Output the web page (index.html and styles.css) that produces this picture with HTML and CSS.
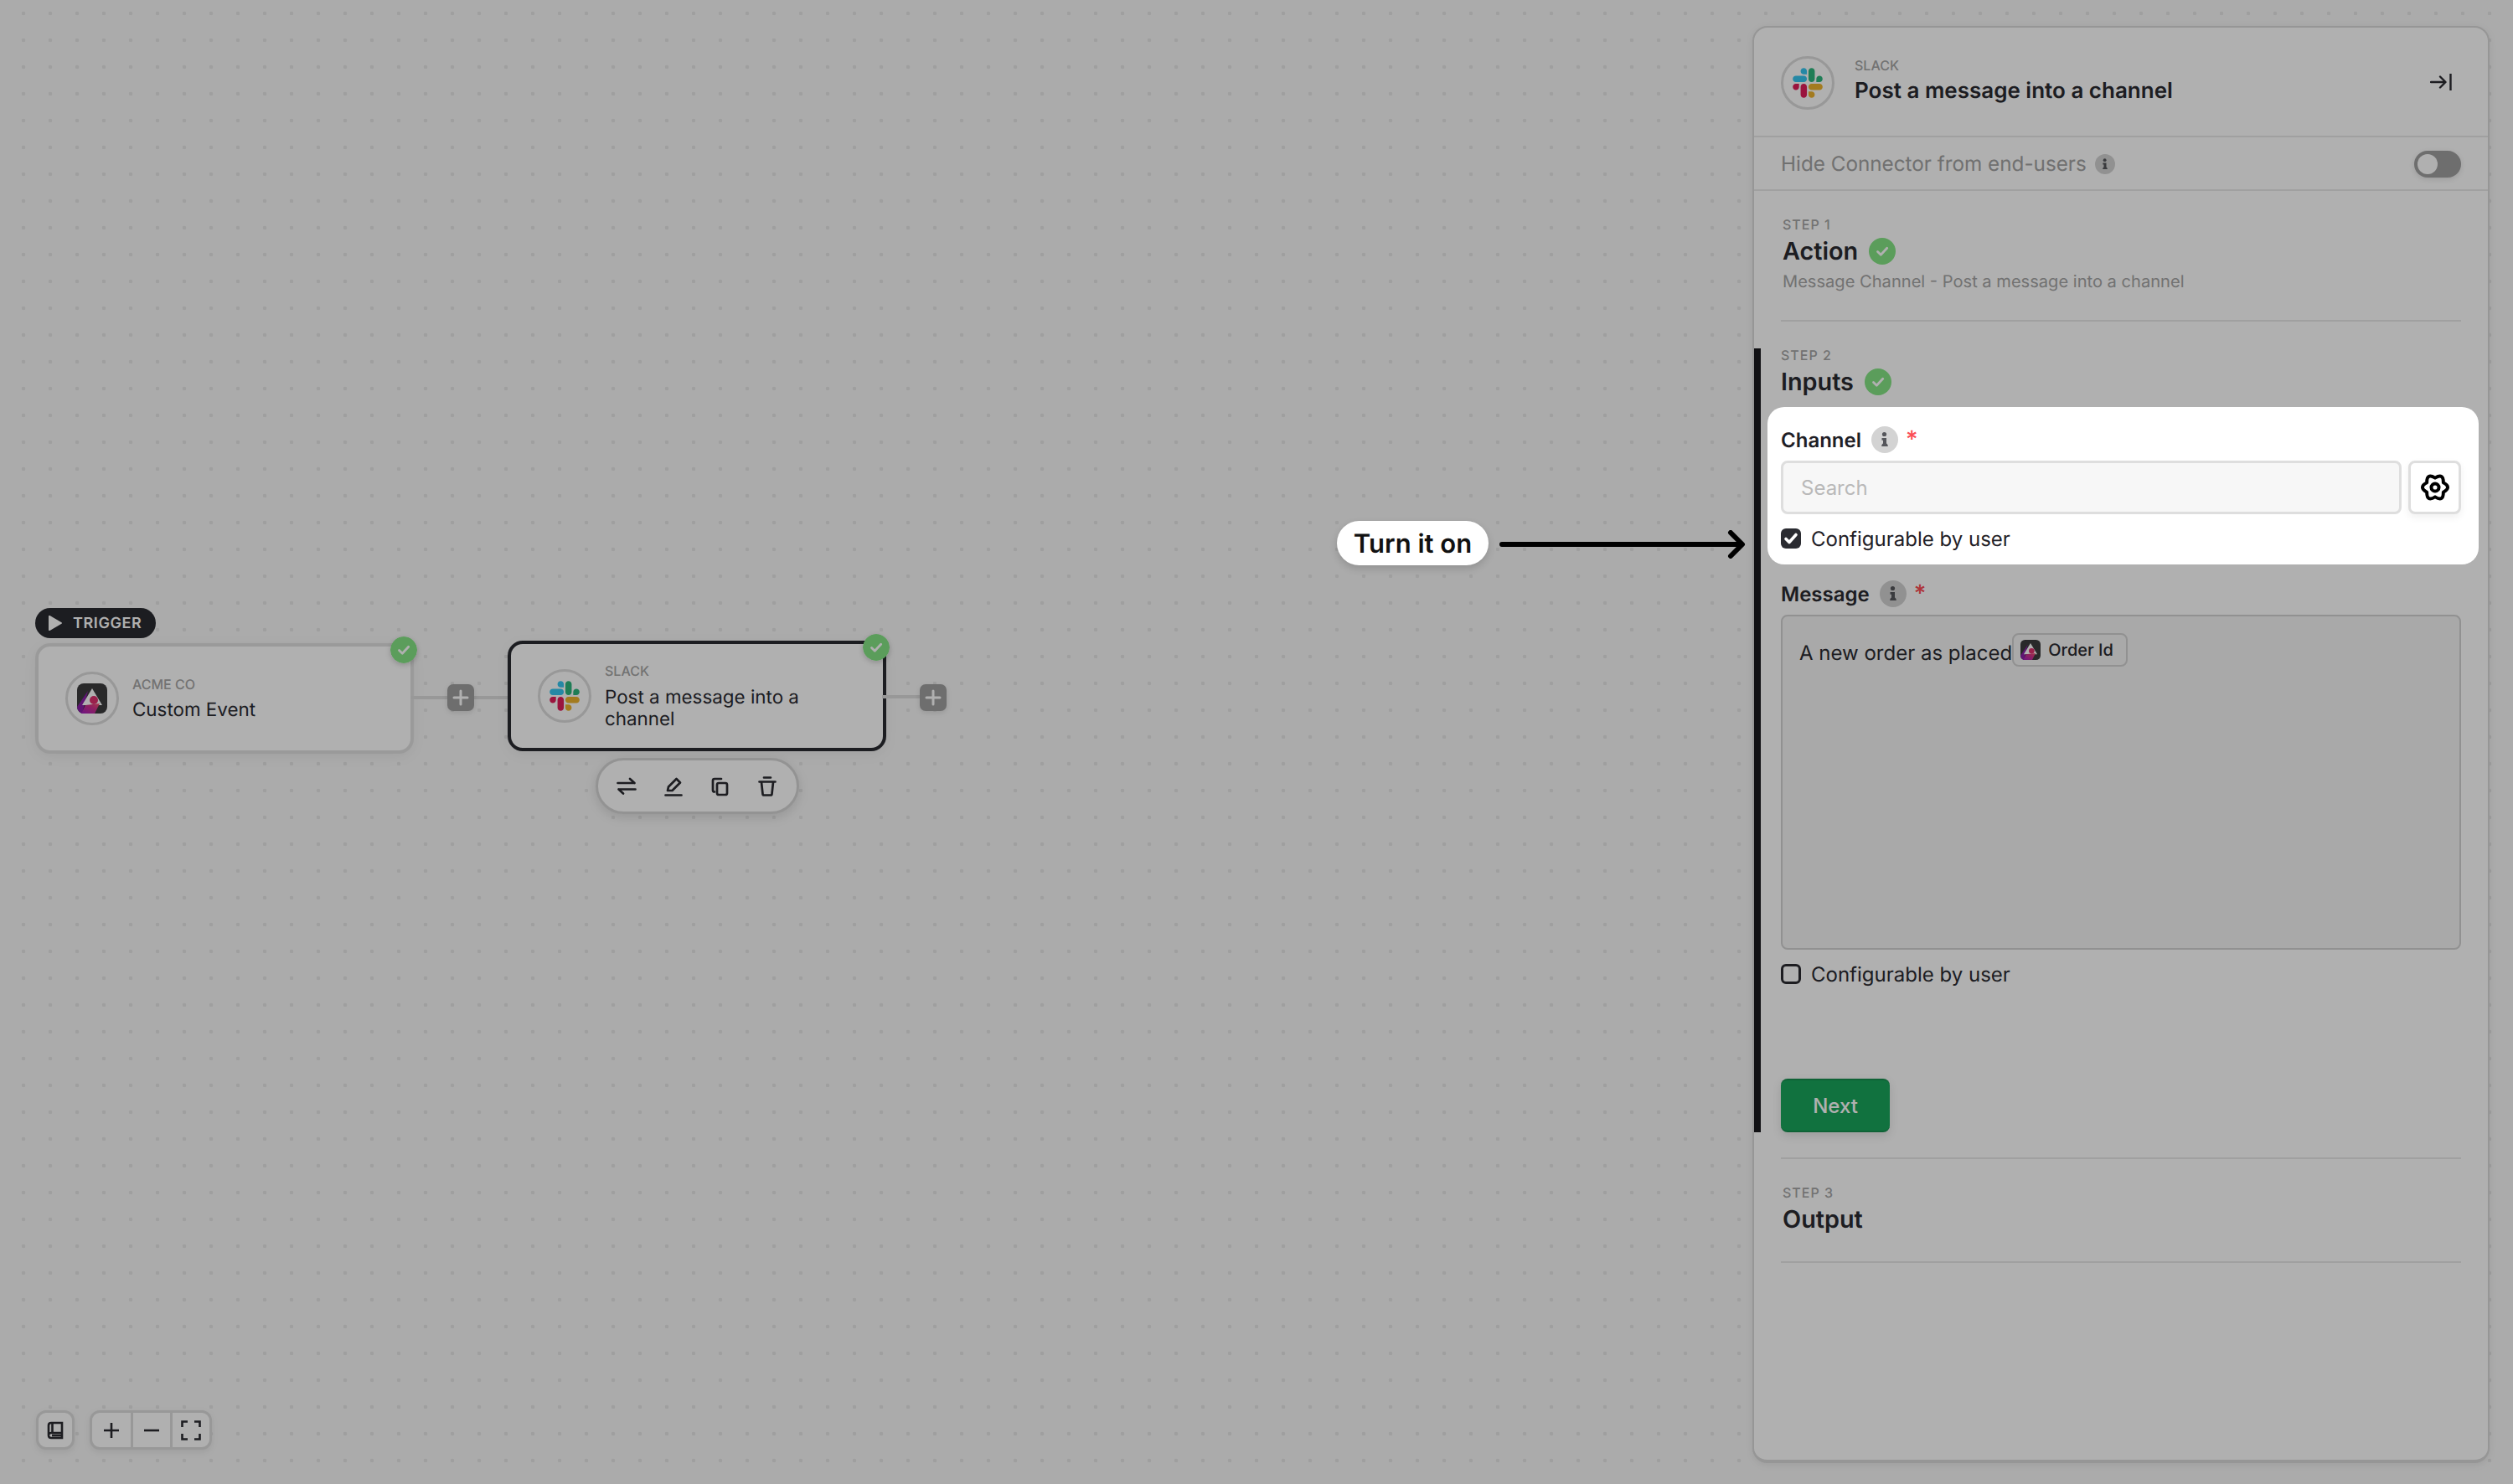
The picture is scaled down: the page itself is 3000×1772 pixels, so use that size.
FILE: index.html
```html
<!DOCTYPE html>
<html lang="en">
<head>
  <meta charset="UTF-8">
  <title>Workflow builder</title>
  <link rel="stylesheet" href="styles.css">
</head>
<body>

  <svg class="defs" width="0" height="0">
    <symbol id="slack" viewBox="0 0 127 127">
      <path d="M27.2 80c0 7.3-5.9 13.2-13.2 13.2C6.7 93.2.8 87.3.8 80c0-7.3 5.9-13.2 13.2-13.2h13.2V80zm6.6 0c0-7.3 5.9-13.2 13.2-13.2 7.3 0 13.2 5.9 13.2 13.2v33c0 7.3-5.9 13.2-13.2 13.2-7.3 0-13.2-5.9-13.2-13.2V80z" fill="#E01E5A"/>
      <path d="M47 27c-7.3 0-13.2-5.9-13.2-13.2C33.8 6.5 39.7.6 47 .6c7.3 0 13.2 5.9 13.2 13.2V27H47zm0 6.7c7.3 0 13.2 5.9 13.2 13.2 0 7.3-5.9 13.2-13.2 13.2H13.9C6.6 60.1.7 54.2.7 46.9c0-7.3 5.9-13.2 13.2-13.2H47z" fill="#36C5F0"/>
      <path d="M99.9 46.9c0-7.3 5.9-13.2 13.2-13.2 7.3 0 13.2 5.9 13.2 13.2 0 7.3-5.9 13.2-13.2 13.2H99.9V46.9zm-6.6 0c0 7.3-5.9 13.2-13.2 13.2-7.3 0-13.2-5.9-13.2-13.2V13.8C66.9 6.5 72.8.6 80.1.6c7.3 0 13.2 5.9 13.2 13.2v33.1z" fill="#2EB67D"/>
      <path d="M80.1 99.8c7.3 0 13.2 5.9 13.2 13.2 0 7.3-5.9 13.2-13.2 13.2-7.3 0-13.2-5.9-13.2-13.2V99.8h13.2zm0-6.6c-7.3 0-13.2-5.9-13.2-13.2 0-7.3 5.9-13.2 13.2-13.2h33.1c7.3 0 13.2 5.9 13.2 13.2 0 7.3-5.9 13.2-13.2 13.2H80.1z" fill="#ECB22E"/>
    </symbol>
    <linearGradient id="acmeGrad" x1="0" y1="1" x2="1" y2="0">
      <stop offset="0" stop-color="#a020c0"/>
      <stop offset="0.6" stop-color="#d0308a"/>
      <stop offset="1" stop-color="#f0506a"/>
    </linearGradient>
    <symbol id="acme" viewBox="0 0 36 36">
      <rect width="36" height="36" rx="8" fill="#3c3c3e"/>
      <path d="M0 28 L13 9 L6 36 H8 A8 8 0 0 1 0 28Z" fill="#8a1fa8"/>
      <path d="M18 6 L6 26 L30 26Z" fill="#fff"/>
      <path d="M5 36 L10 26 L27 24 L21 36Z" fill="url(#acmeGrad)"/>
      <circle cx="20" cy="20" r="5" fill="#e0306e"/>
    </symbol>
    <symbol id="check" viewBox="0 0 32 32">
      <circle cx="16" cy="16" r="16" fill="#84e484"/>
      <path d="M10.5 16.5l3.8 3.8 7.400-8" fill="none" stroke="#fff" stroke-width="2.800" stroke-linecap="round" stroke-linejoin="round"/>
    </symbol>
    <symbol id="info" viewBox="0 0 32 32">
      <circle cx="16" cy="16" r="16" fill="#d3d3d3"/>
      <circle cx="15.500" cy="9.500" r="2.600" fill="#55565b"/>
      <path d="M12.500 14H18v6.500c1 .8 1.800 1.600 1.800 3.500H12.200c0-1.900.8-2.700 1.800-3.500v-3.700h-1.500z" fill="#55565b"/>
    </symbol>
    <symbol id="plus" viewBox="0 0 32 32">
      <path d="M16 8v16M8 16h16" fill="none" stroke="#fff" stroke-width="3" stroke-linecap="round"/>
    </symbol>
  </svg>

  <div class="canvas">

    <div class="badge-trigger">
      <svg class="badge-play" viewBox="0 0 16 18"><path d="M0 1v16c0 1 .8 1.300 1.500.9L15.500 9.800c.6-.4.6-1.200 0-1.600L1.500.1C.8-.3 0 0 0 1z" fill="#fff"/></svg>
      TRIGGER
    </div>

    <div class="node node-first">
      <div class="icon-ring"><svg class="logo"><use href="#acme"/></svg></div>
      <div class="node-text">
        <div class="node-app">ACME CO</div>
        <div class="node-name">Custom Event</div>
      </div>
      <svg class="node-check"><use href="#check"/></svg>
    </div>

    <div class="link link-one"></div>
    <div class="add-btn add-one"><svg><use href="#plus"/></svg></div>

    <div class="node node-second">
      <div class="icon-ring"><svg class="logo"><use href="#slack"/></svg></div>
      <div class="node-text">
        <div class="node-app">SLACK</div>
        <div class="node-name">Post a message into a channel</div>
      </div>
      <svg class="node-check"><use href="#check"/></svg>
    </div>

    <div class="link link-two"></div>
    <div class="add-btn add-two"><svg><use href="#plus"/></svg></div>

    <div class="node-tools">
      <svg viewBox="0 0 24 24"><path d="M1.500 8h20M16 3l5.500 5M22.500 15.500h-20M8 20.500l-5.500-5" /></svg>
      <svg viewBox="0 0 24 24"><path d="M2.500 22.500h19M5 17l1-4.500L15.500 3 20 7.500 10.500 17z"/></svg>
      <svg viewBox="0 0 24 24"><path d="M5 18.500C3.800 18.500 3 17.700 3 16.500V5c0-1.200.8-2 2-2h8"/><rect x="8" y="8" width="12" height="14" rx="2"/></svg>
      <svg viewBox="0 0 24 24"><path d="M8 1.500h8M2.500 6.500h19M5 7l1.500 14c.1.8.7 1.500 1.500 1.500h8c.8 0 1.400-.7 1.500-1.500L19 7"/></svg>
    </div>

    <div class="controls">
      <button class="ctl-btn ctl-single">
        <svg viewBox="0 0 24 24"><path d="M7 3h13v18H7c-2 0-3-1-3-3V6c0-2 1-3 3-3zM8.500 3v12M4.500 16.500c.5-1 1.200-1.500 2.500-1.500h13M8 18h12"/></svg>
      </button>
      <div class="ctl-group">
        <button class="ctl-btn"><svg viewBox="0 0 24 24"><path d="M12 3v18M3 12h18"/></svg></button>
        <button class="ctl-btn"><svg viewBox="0 0 24 24"><path d="M3 12h18"/></svg></button>
        <button class="ctl-btn"><svg viewBox="0 0 24 24"><path d="M8 1.500H1.500V8M16 1.500h6.500V8M1.500 16v6.500H8M22.500 16v6.500H16"/></svg></button>
      </div>
    </div>

    <aside class="panel">
      <div class="panel-head">
        <div class="icon-ring"><svg class="logo"><use href="#slack"/></svg></div>
        <div class="node-text">
          <div class="node-app">SLACK</div>
          <div class="panel-title">Post a message into a channel</div>
        </div>
        <svg class="collapse" viewBox="0 0 26 20"><path d="M1 10h17M12 3.500l6.500 6.500-6.500 6.500M24.500 0v20"/></svg>
      </div>

      <div class="hide-row">
        <span class="hide-text">Hide Connector from end-users</span>
        <svg class="info-small"><use href="#info"/></svg>
        <span class="toggle"><span class="toggle-knob"></span></span>
      </div>

      <section class="step step-one">
        <div class="step-label">STEP 1</div>
        <div class="step-title">Action <svg class="step-check"><use href="#check"/></svg></div>
        <div class="step-desc">Message Channel - Post a message into a channel</div>
      </section>

      <section class="step-active">
        <div class="step-label">STEP 2</div>
        <div class="step-title step-title-inputs">Inputs <svg class="step-check"><use href="#check"/></svg></div>

        <div class="highlight">
          <div class="field-label">Channel <svg class="info-icon"><use href="#info"/></svg><span class="req">*</span></div>
          <div class="input-row">
            <input class="search" type="text" placeholder="Search">
            <button class="gear-btn">
              <svg viewBox="0 0 24 24"><path d="M18.930 8Q26.300 12 18.930 16Q19.150 24.380 12 20Q4.850 24.380 5.070 16Q-2.300 12 5.070 8Q4.850 -.38 12 4Q19.150 -.38 18.930 8Z"/><circle cx="12" cy="12" r="3.200"/></svg>
            </button>
          </div>
          <label class="config-row">
            <span class="box box-on"><svg viewBox="0 0 24 24"><path d="M6 12.500l4 4 8-9"/></svg></span>
            Configurable by user
          </label>
        </div>

        <div class="field-label field-message">Message <svg class="info-icon"><use href="#info"/></svg><span class="req">*</span></div>
        <div class="message-box">
          <span class="message-text">A new order as placed</span><span class="chip"><svg class="chip-logo"><use href="#acme"/></svg>Order Id</span>
        </div>
        <label class="config-row config-msg">
          <span class="box"></span>
          Configurable by user
        </label>

        <button class="next-btn">Next</button>
      </section>

      <section class="step step-three">
        <div class="step-label">STEP 3</div>
        <div class="step-title">Output</div>
      </section>
    </aside>

    <div class="overlay"></div>

    <div class="callout">Turn it on</div>
    <svg class="callout-arrow" viewBox="0 0 296 34"><path d="M5 17h286M278 3l14 14-14 14"/></svg>

  </div>

</body>
</html>
```

FILE: styles.css
```css
* {
  box-sizing: border-box;
}

html, body {
  margin: 0;
  height: 100%;
}

body {
  font-family: Inter, "Liberation Sans", sans-serif;
  color: #2a2b31;
  text-rendering: geometricPrecision;
}

.defs {
  position: absolute;
}

.canvas {
  position: relative;
  width: 3000px;
  height: 1772px;
  overflow: hidden;
  display: flex;
  justify-content: flex-end;
  align-items: flex-start;
  padding: 31px 28px 0 0;
  background-color: #f8f8f8;
  background-image: radial-gradient(circle at 16px 16px, #e6e6e6 2px, transparent 2.6px);
  background-size: 32px 32px;
  background-position: 12px 0;
}

.overlay {
  position: absolute;
  inset: 0;
  z-index: 10;
  background: rgba(0, 0, 0, 0.31);
}

/* nodes on the canvas */
.badge-trigger {
  position: absolute;
  left: 42px;
  top: 726px;
  width: 144px;
  height: 36px;
  border-radius: 18px;
  background: #292a30;
  color: #fff;
  font-size: 18px;
  font-weight: 600;
  letter-spacing: 0.6px;
  display: flex;
  align-items: center;
  gap: 13px;
  padding-left: 16px;
}

.badge-play {
  width: 16px;
  height: 18px;
}

.node {
  position: absolute;
  width: 452px;
  height: 132px;
  background: #fff;
  border: 4px solid #e0e0e0;
  border-radius: 18px;
  box-shadow: 0 4px 16px rgba(0, 0, 0, 0.06);
  display: flex;
  align-items: center;
  gap: 16px;
  padding-left: 32px;
}

.node-first {
  left: 42px;
  top: 768px;
}

.node-second {
  left: 606px;
  top: 765px;
  border-color: #292a30;
}

.icon-ring {
  width: 64px;
  height: 64px;
  flex: none;
  border: 3px solid #dcdcdc;
  border-radius: 50%;
  display: flex;
  align-items: center;
  justify-content: center;
}

.logo {
  width: 36px;
  height: 36px;
}

.node-text {
  min-width: 0;
  width: 300px;
}

.node-app {
  font-size: 16px;
  line-height: 20px;
  font-weight: 500;
  color: #a5a5a5;
  margin-bottom: 8px;
}

.node-second .node-app {
  margin-bottom: 9px;
}

.node-name {
  font-size: 22.400px;
  line-height: 26px;
}

.node-first .node-text {
  padding-bottom: 1px;
}

.node-check {
  position: absolute;
  right: -8px;
  top: -12px;
  width: 32px;
  height: 32px;
  border-radius: 50%;
  box-shadow: 0 2px 6px rgba(0, 0, 0, 0.2);
}

.link {
  position: absolute;
  height: 4px;
  background: #dcdcdc;
}

.link-one {
  left: 490px;
  top: 831px;
  width: 120px;
}

.link-two {
  left: 1053px;
  top: 830px;
  width: 50px;
}

.add-btn {
  position: absolute;
  width: 32px;
  height: 32px;
  border-radius: 7px;
  background: #a0a0a0;
  box-shadow: 0 2px 6px rgba(0, 0, 0, 0.12);
}

.add-btn svg {
  display: block;
  width: 32px;
  height: 32px;
}

.add-one {
  left: 534px;
  top: 817px;
}

.add-two {
  left: 1098px;
  top: 817px;
}

.node-tools {
  position: absolute;
  left: 711px;
  top: 905px;
  width: 243px;
  height: 67px;
  background: #fff;
  border: 3px solid #d6d6d6;
  border-radius: 34px;
  box-shadow: 0 4px 14px rgba(0, 0, 0, 0.12);
  display: flex;
  align-items: center;
  justify-content: center;
  gap: 32px;
  padding-right: 1px;
}

.node-tools svg {
  width: 24px;
  height: 24px;
  fill: none;
  stroke: #2a2b31;
  stroke-width: 2.700;
  stroke-linecap: round;
  stroke-linejoin: round;
}

/* zoom controls */
.controls {
  position: absolute;
  left: 43px;
  top: 1684px;
  display: flex;
  gap: 18px;
}

.ctl-group {
  display: flex;
  background: #fff;
  border: 3px solid #dcdcdc;
  border-radius: 12px;
  box-shadow: 0 3px 8px rgba(0, 0, 0, 0.08);
}

.ctl-btn {
  width: 46px;
  height: 41px;
  padding: 0;
  border: none;
  background: none;
  display: flex;
  align-items: center;
  justify-content: center;
}

.ctl-group .ctl-btn + .ctl-btn {
  width: 47px;
  border-left: 3px solid #dcdcdc;
}

.ctl-single {
  height: 47px;
  background: #fff;
  border: 3px solid #dcdcdc;
  border-radius: 12px;
  box-shadow: 0 3px 8px rgba(0, 0, 0, 0.08);
}

.ctl-btn svg {
  width: 24px;
  height: 24px;
  fill: none;
  stroke: #2a2b31;
  stroke-width: 2.600;
}

/* side panel */
.panel {
  width: 880px;
  height: 1716px;
  background: #fff;
  border: 2px solid #d9d9d9;
  border-bottom-width: 4px;
  border-radius: 18px;
  box-shadow: 0 2px 10px rgba(0, 0, 0, 0.08);
}

.panel-head {
  height: 131px;
  border-bottom: 2px solid #e8e8e8;
  display: flex;
  align-items: center;
  gap: 24px;
  padding: 2px 43px 0 32px;
}

.panel-head .node-text {
  flex: 1;
  padding-bottom: 3px;
}

.panel-head .node-app {
  margin-bottom: 4px;
}

.panel-title {
  font-size: 26px;
  line-height: 34px;
  font-weight: 600;
}

.collapse {
  width: 26px;
  height: 20px;
  margin-bottom: 2px;
  fill: none;
  stroke: #2a2b31;
  stroke-width: 2.400;
  stroke-linecap: round;
  stroke-linejoin: round;
}

.hide-row {
  height: 64px;
  border-bottom: 2px solid #e8e8e8;
  display: flex;
  align-items: center;
  padding: 0 32px;
}

.hide-text {
  font-size: 24.250px;
  color: #a3a3a3;
}

.info-small {
  width: 24px;
  height: 24px;
  margin: 2px 0 0 10px;
  flex: none;
}

.toggle {
  margin: 2px 0 0 auto;
  width: 56px;
  height: 32px;
  border-radius: 16px;
  background: #a0a0a0;
  padding: 4px;
  box-shadow: 0 2px 6px rgba(0, 0, 0, 0.12);
}

.toggle-knob {
  display: block;
  width: 24px;
  height: 24px;
  border-radius: 50%;
  background: #fff;
}

.step {
  margin: 0 32px;
  padding: 0 2px;
  border-bottom: 2px solid #e8e8e8;
}

.step-one {
  padding-top: 30px;
  padding-bottom: 32px;
}

.step-three {
  margin-top: 30px;
  padding-top: 30px;
  padding-bottom: 30px;
  border-top: 2px solid #e8e8e8;
}

.step-label {
  font-size: 16px;
  line-height: 20px;
  font-weight: 500;
  letter-spacing: 1px;
  color: #a5a5a5;
}

.step-title {
  margin-top: 2px;
  font-size: 28.800px;
  line-height: 40px;
  font-weight: 600;
  display: flex;
  align-items: center;
  gap: 13px;
}

.step-check {
  width: 32px;
  height: 32px;
}

.step-desc {
  margin-top: 2px;
  font-size: 20.100px;
  line-height: 28px;
  color: #a5a5a5;
}

.step-active {
  margin-top: 32px;
  height: 936px;
  padding: 0 32px 0 24px;
  border-left: 8px solid #1a1a1d;
}

.step-active .step-label {
  line-height: 16px;
}

.step-title-inputs {
  margin-top: 4px;
}

/* the one field that is lit above the overlay */
.highlight {
  position: relative;
  z-index: 20;
  margin: 10px -21px 0 -16px;
  padding: 23px 21px 19px 16px;
  background: #fff;
  border-radius: 20px;
  color: #1f2026;
}

.field-label {
  height: 32px;
  display: flex;
  align-items: center;
  font-size: 24px;
  font-weight: 600;
}

.info-icon {
  width: 32px;
  height: 32px;
  margin-left: 12px;
}

.req {
  margin-left: 9px;
  margin-top: -2px;
  color: #fb4d55;
  font-size: 28px;
  font-weight: 500;
}

.input-row {
  margin-top: 9px;
  display: flex;
  gap: 8px;
}

.search {
  flex: 1;
  min-width: 0;
  height: 64px;
  padding: 0 21px;
  background: #f7f7f7;
  border: 3px solid #dedede;
  border-radius: 8px;
  font: 400 24px Inter, sans-serif;
}

.search::placeholder {
  color: #b9b9b9;
}

.gear-btn {
  width: 63px;
  height: 64px;
  padding: 0;
  background: #fff;
  border: 3px solid #dedede;
  border-radius: 8px;
  box-shadow: 0 4px 10px rgba(0, 0, 0, 0.06);
  display: flex;
  align-items: center;
  justify-content: center;
}

.gear-btn svg {
  width: 34px;
  height: 34px;
  fill: none;
  stroke: #000;
  stroke-width: 2.800;
  stroke-linejoin: round;
}

.config-row {
  margin-top: 17px;
  height: 24px;
  display: flex;
  align-items: center;
  gap: 12px;
  font-size: 24px;
}

.box {
  width: 24px;
  height: 24px;
  border: 3px solid #2a2b31;
  border-radius: 6px;
}

.box-on {
  background: #2a2b31;
  border: none;
}

.box-on svg {
  display: block;
  width: 24px;
  height: 24px;
  fill: none;
  stroke: #fff;
  stroke-width: 3.600;
  stroke-linecap: round;
  stroke-linejoin: round;
}

.field-message {
  margin-top: 19px;
}

.message-box {
  margin-top: 9px;
  height: 400px;
  background: #f5f5f5;
  border: 2px solid #d2d2d2;
  border-radius: 8px;
  padding: 20px 20px;
  display: flex;
  align-items: flex-start;
}

.message-text {
  padding-top: 10px;
  font-size: 24px;
  line-height: 28px;
}

.chip {
  width: 138px;
  height: 40px;
  background: #f5f5f5;
  border: 2px solid #d2d2d2;
  border-radius: 8px;
  display: flex;
  align-items: center;
  gap: 9px;
  padding-left: 8px;
  font-size: 20px;
  font-weight: 500;
}

.chip-logo {
  width: 24px;
  height: 24px;
}

.next-btn {
  display: block;
  margin-top: 113px;
  width: 130px;
  height: 64px;
  background: #1aa65c;
  color: #fff;
  border: none;
  border-top: 2px solid #168f4f;
  border-bottom: 2px solid #168f4f;
  border-radius: 8px;
  box-shadow: 0 4px 12px rgba(0, 0, 0, 0.12);
  font: 500 24px Inter, sans-serif;
}

/* annotation */
.callout {
  position: absolute;
  z-index: 20;
  left: 1596px;
  top: 622px;
  width: 181px;
  height: 53px;
  padding-top: 2px;
  background: #fff;
  border-radius: 27px;
  display: flex;
  align-items: center;
  justify-content: center;
  font-size: 31px;
  font-weight: 600;
  color: #111;
  box-shadow: 0 4px 10px rgba(0, 0, 0, 0.15);
}

.callout-arrow {
  position: absolute;
  z-index: 20;
  left: 1788px;
  top: 633px;
  width: 296px;
  height: 34px;
  fill: none;
  stroke: #000;
  stroke-width: 6;
  stroke-linecap: round;
  stroke-linejoin: round;
}
```
